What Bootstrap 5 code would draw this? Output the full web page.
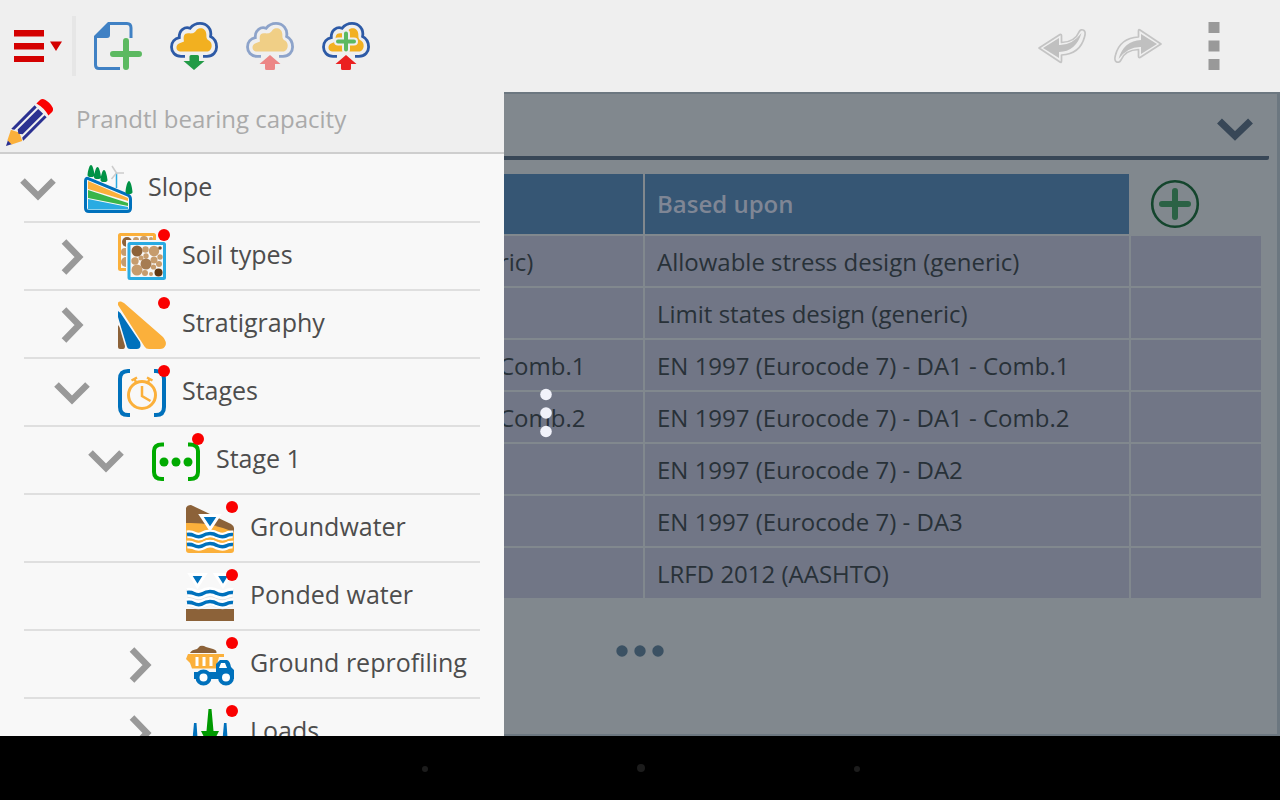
<!DOCTYPE html>
<html lang="en">
<head>
<meta charset="utf-8">
<meta name="viewport" content="width=device-width, initial-scale=1">
<title>Slope – Prandtl bearing capacity</title>
<link rel="stylesheet" href="https://cdn.jsdelivr.net/npm/bootstrap@5.3.0/dist/css/bootstrap.min.css">
<style>
  body { font-family: "Open Sans", sans-serif; font-size: 24px; line-height: 32px; background: #000; }
  svg { display: block; overflow: visible; flex: none; }
  .toolbar { height: 92px; background: #efefef; gap: 28px; padding: 0 42px 0 14px; }
  .tool { border: 0; background: none; padding: 0; }
  .tool-rule { width: 4px; height: 60px; background: #e6e6e6; margin: 0 -10px 0 -18px; }
  .drawer { flex: 0 0 504px; background: #f8f8f8; min-height: 0; }
  .drawer-head { height: 62px; flex: none; background: #efefef; border-bottom: 2px solid #cecece; padding: 0 6px; gap: 22px; }
  .drawer-head input { border: 0; background: none; color: #aaa; padding: 0 0 6px; min-width: 0; outline: 0; }
  .tree { padding-top: 1px; }
  .tree-row { height: 68px; padding-left: 20px; background: linear-gradient(#dfdfdf, #dfdfdf) no-repeat 24px 100% / calc(100% - 48px) 2px; color: #4d4d4d; }
  .tree-row .tool, .no-toggle { width: 36px; margin-right: 28px; flex: none; }
  .tree-row a { color: inherit; gap: 16px; }
  .tree-row a span { margin-top: -6px; font-size: 25px; }
  .depth-1 { padding-left: 54px; }
  .depth-2 { padding-left: 88px; }
  .depth-3 { padding-left: 122px; }
  .work { background: #81888e; border: solid #6c7780; border-width: 2px 3px 2px 0; min-width: 0; }
  .work-head { height: 66px; border-bottom: 4px solid #384757; margin-right: 8px; padding: 4px 16px 0 0; border-bottom-right-radius: 2px; }
  .design { table-layout: fixed; width: calc(100% - 14px); margin-top: 14px; color: #283138; border-collapse: separate; border-spacing: 0; }
  .design td, .design th { height: 52px; padding: 2px 0 0; border: solid #81888e; border-width: 0 2px 2px 0; background: #717686; white-space: nowrap; overflow: hidden; }
  .design td:first-child { text-indent: -5px; }
  .design th { height: 62px; padding: 0; background: #365674; color: #7f8695; font-weight: 600; }
  .design .add-cell { background: none; padding: 0 0 0 20px; }
  .add-cell .tool { display: block; }
  .design td + td, .design th.based { padding-left: 12px; }
  .col-based { width: 486px; }
  .col-add { width: 132px; }
  .more { margin: 45px 0 0 112px; }
  .grip { left: 36px; top: 294px; }
  .sysbar { height: 64px; background: #000; padding-left: 2px; }
</style>
</head>
<body>
<svg width="0" height="0" class="position-absolute" aria-hidden="true">
  <defs>
    <path id="down" d="M2.5 9.5 18 25 33.5 9.5" fill="none" stroke="#999" stroke-width="6.5"/>
    <path id="right" d="M10 2.500 25 18 10 33.500" fill="none" stroke="#999" stroke-width="6.500"/>
    <path id="cloudline" d="M15 34.400H11C5 34.400 1.500 30 1.500 25C1.500 20 5 16.500 9.300 15.600C8.800 8 15 4.300 20 6.300C23 2.500 27 1.300 30 1.300C37 1.300 42 7 40.600 14.500C44.500 16.500 46.600 20 46.600 25C46.600 30 43 34.400 37 34.400H33" fill="none" stroke="#2d5aa6" stroke-width="2.800"/>
    <path id="cloudfill" d="M10 29.500C5.500 29 5.500 23 9 21.500L14 19.500C13 14 14 10.800 19 11.300C24 12 25 10 27 7.500C30 5 36 6 36.300 12C36.500 15 36 17 39 18.500C43 21 42.500 28 38 29.500Z" fill="#f2b020"/>
    <path id="arrowup" d="M24 33 34.500 42H29V46.500Q29 48 27.500 48H20.500Q19 48 19 46.500V42H13.500Z" fill="#eb2020"/>
    <path id="waves" d="M1 3.500Q5 3 8 4.500Q12 6.500 16 5Q20 2.500 24 2.500Q28 2.500 31 4.500Q36 6.500 40 5Q43 3 47 3.500" fill="none"/>
    <circle id="dot" cx="46" cy="2" r="6" fill="#fa0000"/>
  </defs>
</svg>

<div class="d-flex flex-column vh-100">
  <header class="toolbar d-flex align-items-center flex-shrink-0">
    <button class="tool" type="button" aria-label="Menu"><svg width="48" height="48"><path d="M0 8h30v6.500H0zM0 21h30v6.500H0zM0 34h30v6H0zM36 19.500h12L42 29z" fill="#d40000"/></svg></button>
    <div class="tool-rule"></div>
    <button class="tool" type="button" aria-label="New file"><svg width="48" height="48"><path d="M1.500 15V43Q1.500 46.500 5 46.500H26M37 16V6Q37 1.500 33 1.500H15" fill="none" stroke="#4081c4" stroke-width="3"/><path d="M0 16V14L14 0H16V13Q16 16 13 16Z" fill="#4081c4"/><path d="M32 19V45M19 32H45" stroke="#5cb961" stroke-width="6" stroke-linecap="round"/></svg></button>
    <button class="tool" type="button" aria-label="Download from cloud"><svg width="48" height="48"><use href="#cloudline"/><use href="#cloudfill"/><path d="M19.500 34.500Q19.500 33 21 33H27.500Q29 33 29 34.500V39H34.500L24 48 13.500 39H19.500Z" fill="#229a46"/></svg></button>
    <button class="tool" type="button" aria-label="Upload to cloud"><svg width="48" height="48" opacity=".5"><use href="#cloudline"/><use href="#cloudfill"/><use href="#arrowup"/></svg></button>
    <button class="tool" type="button" aria-label="Upload as new"><svg width="48" height="48"><use href="#cloudline"/><use href="#cloudfill"/><path d="M24 11.500V27.500M16 19.500H32" stroke="#efefef" stroke-width="8" stroke-linecap="round"/><path d="M24 11.500V27.500M16 19.500H32" stroke="#5cb961" stroke-width="4" stroke-linecap="round"/><use href="#arrowup"/></svg></button>
    <button class="tool ms-auto" type="button" aria-label="Undo"><svg width="48" height="48"><path id="undo" d="M1 26 22 12.500Q23.500 12 23.500 14V20.500Q37 20 41 10Q43 6.500 46 8.500Q48 10 46.500 15Q42 32 23.500 33V39Q23.500 41 22 40Z" fill="#efefef" stroke="#c4c4c4" stroke-width="1.700" stroke-linejoin="round"/><path id="undofill" d="M5 26 21 16V23Q34 23.500 43.500 11Q38 29.500 21 30V36Z" fill="#c0c0c0"/></svg></button>
    <button class="tool" type="button" aria-label="Redo"><svg width="48" height="48"><g transform="rotate(180 24 24)"><use href="#undo"/><use href="#undofill"/></g></svg></button>
    <button class="tool" type="button" aria-label="More"><svg width="48" height="48"><path d="M18.500 0h11v11h-11zM18.500 18.500h11v11h-11zM18.500 37h11v11h-11z" fill="#999"/></svg></button>
  </header>

  <div class="d-flex flex-grow-1 overflow-hidden">
    <aside class="drawer d-flex flex-column">
      <div class="drawer-head d-flex align-items-center">
        <svg width="48" height="48"><g transform="translate(0 48) rotate(-45)"><path d="M0 0 6 -3V3Z" fill="#2b3191"/><path d="M5 -3 15 -8 17 -4 19 0 17 4 15 8 5 3Z" fill="#fbb03b"/><path d="M16 -8.500H49V-5.500H17.500Q16 -7 16 -8.500ZM16 8.500H49V5.500H17.500Q16 7 16 8.500ZM20 -3.500H49V3.500H20L17.500 0Z" fill="#2b3191"/><path d="M51.500 -8.500H57Q61 -8 61 0T57 8.500H51.500Q54 0 51.500 -8.500Z" fill="#fa0000"/></g></svg>
        <input class="flex-grow-1" type="text" aria-label="Project name" value="Prandtl bearing capacity">
      </div>
      <nav class="tree overflow-hidden" aria-label="Project tree">
        <div class="tree-row d-flex align-items-center">
          <button class="tool" type="button" aria-label="Collapse Slope"><svg width="36" height="36"><use href="#down"/></svg></button>
          <a href="#" class="d-flex align-items-center text-decoration-none">
            <svg width="48" height="48"><path d="M1.500 16Q1.500 12 5 14L44 30Q46.500 31.500 46.500 34V43Q46.500 46.500 43 46.500H5Q1.500 46.500 1.500 43Z" fill="#f8f8f8" stroke="#0071bc" stroke-width="3"/><path d="M4 16 44 33V36L4 24Z" fill="#fbb03b"/><path d="M4 25 44 38V41L4 33Z" fill="#39b54a"/><path d="M4 34 44 42V44.500H4Z" fill="#29abe2"/><path d="M3.500 10C4 5 5.500 0 7 0s3 5 3.500 10q0 2-3.500 2t-3.500-2zM10 12c.5-5 2-10 3.500-10S16.500 7 17 12q0 2-3.500 2T10 12zM16.500 15C17 10 18.500 5 20 5s3 5 3.500 10q0 2-3.500 2t-3.500-2zM41.500 27C42 21 43.500 16 45 16s3 5 3.500 11q0 2-3.500 2t-3.500-2z" fill="#009245"/><path d="M32.500 8V23" stroke="#29abe2" stroke-width="1.500"/><path d="M32.500 8 28 1M32.500 8H40M32.500 8 27.500 14" stroke="#ccc" stroke-width="1.500"/></svg>
            <span>Slope</span></a>
        </div>
        <div class="tree-row depth-1 d-flex align-items-center">
          <button class="tool" type="button" aria-label="Expand Soil types"><svg width="36" height="36"><use href="#right"/></svg></button>
          <a href="#" class="d-flex align-items-center text-decoration-none">
            <svg width="48" height="48"><rect x="1.500" y="1.500" width="35" height="35" rx="1" fill="#f8f8f8" stroke="#fbb03b" stroke-width="3"/><circle cx="9" cy="9" r="5" fill="#8c6239"/><g fill="#c69c6d"><circle cx="18" cy="7" r="3"/><circle cx="26" cy="7" r="4"/><circle cx="7" cy="19" r="4"/><circle cx="8" cy="29" r="5"/><circle cx="33" cy="6" r="2"/></g><rect x="8" y="7" width="40" height="40" fill="#f8f8f8"/><rect x="11" y="10.500" width="35.500" height="35" rx="1" fill="#f8f8f8" stroke="#29abe2" stroke-width="3"/><g fill="#c69c6d"><circle cx="27.500" cy="16.500" r="3.200"/><circle cx="36" cy="18" r="5.200"/><circle cx="17" cy="28" r="3.700"/><circle cx="23" cy="25" r="2.500"/><circle cx="28" cy="23" r="2.700"/><circle cx="36" cy="27" r="3.500"/><circle cx="42" cy="24" r="2.700"/><circle cx="19" cy="37" r="5.500"/><circle cx="27" cy="40" r="3"/><circle cx="35.500" cy="34" r="2.600"/><circle cx="41" cy="31" r="3"/><circle cx="33" cy="41" r="2"/></g><circle cx="19" cy="18" r="5.500" fill="#8c6239"/><circle cx="28" cy="31" r="5.500" fill="#a67c52"/><circle cx="40.500" cy="39.500" r="4" fill="#603813"/><circle cx="42" cy="15" r="1.800" fill="#754c24"/><use href="#dot"/></svg>
            <span>Soil types</span></a>
        </div>
        <div class="tree-row depth-1 d-flex align-items-center">
          <button class="tool" type="button" aria-label="Expand Stratigraphy"><svg width="36" height="36"><use href="#right"/></svg></button>
          <a href="#" class="d-flex align-items-center text-decoration-none">
            <svg width="48" height="48"><path d="M0 4V2Q0 0 3 .5L6 2 45 36Q49 41 47.500 44.500Q46 48 42 48H31Q28 48 26.500 45.500Z" fill="#fbb03b"/><path d="M0 10 2.500 12 22 41Q24 48 19 48H12Q9.500 48 9 46L0 16Z" fill="#0071bc"/><path d="M0 24 1.500 26 7 45Q7 48 5 48H2Q0 48 0 46Z" fill="#8c6239"/><use href="#dot"/></svg>
            <span>Stratigraphy</span></a>
        </div>
        <div class="tree-row depth-1 d-flex align-items-center">
          <button class="tool" type="button" aria-label="Collapse Stages"><svg width="36" height="36"><use href="#down"/></svg></button>
          <a href="#" class="d-flex align-items-center text-decoration-none">
            <svg width="48" height="48"><path d="M12 2H10Q2 2 2 10V38Q2 46 10 46H12M36 2H38Q46 2 46 10V38Q46 46 38 46H36" fill="none" stroke="#0071bc" stroke-width="4"/><g fill="none" stroke="#fbb03b" stroke-width="3"><circle cx="24" cy="26" r="13.500"/><path d="M13.500 11.500 19 8.500M34.500 11.500 29 8.500M16 9.500 18 13M32 9.500 30 13M24 17V27L32.500 32" stroke-width="2.500"/></g><use href="#dot"/></svg>
            <span>Stages</span></a>
        </div>
        <div class="tree-row depth-2 d-flex align-items-center">
          <button class="tool" type="button" aria-label="Collapse Stage 1"><svg width="36" height="36"><use href="#down"/></svg></button>
          <a href="#" class="d-flex align-items-center text-decoration-none">
            <svg width="48" height="48"><path d="M12 7.500H10Q2 7.500 2 14V35Q2 42 10 42H12M36 7.500H38Q46 7.500 46 14V35Q46 42 38 42H36" fill="none" stroke="#0a0" stroke-width="4"/><g fill="#0a0"><circle cx="12" cy="25" r="4.500"/><circle cx="24" cy="25" r="4.500"/><circle cx="36" cy="25" r="4.500"/></g><use href="#dot"/></svg>
            <span>Stage 1</span></a>
        </div>
        <div class="tree-row depth-3 d-flex align-items-center">
          <div class="no-toggle"></div>
          <a href="#" class="d-flex align-items-center text-decoration-none">
            <svg width="48" height="48"><path d="M0 3Q1 0 5 0L45 19Q48 21 48 23V27L20 24 0 18Z" fill="#8c6239"/><path d="M0 18Q25 17 48 27V45Q48 48 45 48H3Q0 48 0 45Z" fill="#fbb03b"/><use href="#waves" y="26" stroke="#fff" stroke-width="8"/><use href="#waves" y="36" stroke="#fff" stroke-width="8"/><use href="#waves" y="26" stroke="#0071bc" stroke-width="3.500"/><use href="#waves" y="31" stroke="#fbb03b" stroke-width="2"/><use href="#waves" y="36" stroke="#0071bc" stroke-width="3.500"/><path d="M15 10.500H33L24 24Z" fill="#0071bc" stroke="#fff" stroke-width="3"/><use href="#dot"/></svg>
            <span>Groundwater</span></a>
        </div>
        <div class="tree-row depth-3 d-flex align-items-center">
          <div class="no-toggle"></div>
          <a href="#" class="d-flex align-items-center text-decoration-none">
            <svg width="48" height="48"><path d="M0 36H48V48H0Z" fill="#8c6239"/><use href="#waves" y="17" stroke="#e4e4e4" stroke-width="9"/><use href="#waves" y="16" stroke="#fff" stroke-width="9"/><use href="#waves" y="27" stroke="#e4e4e4" stroke-width="7"/><use href="#waves" y="26" stroke="#fff" stroke-width="8"/><use href="#waves" y="16" stroke="#0071bc" stroke-width="3.500"/><use href="#waves" y="26" stroke="#0071bc" stroke-width="3.500"/><path d="M4 1.500H19L11.500 13.500ZM29.500 1.500H44.500L37 13.500Z" fill="#0071bc" stroke="#fff" stroke-width="3"/><use href="#dot"/></svg>
            <span>Ponded water</span></a>
        </div>
        <div class="tree-row depth-3 d-flex align-items-center">
          <button class="tool" type="button" aria-label="Expand Ground reprofiling"><svg width="36" height="36"><use href="#right"/></svg></button>
          <a href="#" class="d-flex align-items-center text-decoration-none">
            <svg width="48" height="48"><path d="M4 12Q5 9 11 8L14 5Q17 4 20 6L27 8Q31 9 30.500 12Z" fill="#8c6239"/><path d="M2 13H38V16L33 16 30 27.500H6L4 22 0 18Z" fill="#fbb03b"/><path d="M11 16V25M18 16V25M25 16V25" stroke="#fff" stroke-width="3"/><path d="M8 31H30V23L34 19H41Q44 20 45 26L48 29V38H8Z" fill="#0071bc"/><path d="M35 22H39L41 27H33Z" fill="#fff"/><g fill="#fff" stroke="#0071bc" stroke-width="4"><circle cx="17.500" cy="36.500" r="6"/><circle cx="40" cy="36.500" r="6"/></g><use href="#dot"/></svg>
            <span>Ground reprofiling</span></a>
        </div>
        <div class="tree-row depth-3 d-flex align-items-center">
          <button class="tool" type="button" aria-label="Expand Loads"><svg width="36" height="36"><use href="#right"/></svg></button>
          <a href="#" class="d-flex align-items-center text-decoration-none">
            <svg width="48" height="48"><path d="M22.500 0h3L27.500 22H33L24 40 15 22H20.500Z" fill="#090"/><path d="M8 14h2.500l1.500 22H6zM38 14h2.500l1.500 22h-6z" fill="#0071bc"/><use href="#dot"/></svg>
            <span>Loads</span></a>
        </div>
      </nav>
    </aside>

    <main class="work flex-grow-1 position-relative overflow-hidden">
      <div class="work-head d-flex align-items-center justify-content-end">
        <button class="tool" type="button" aria-label="Collapse panel"><svg width="36" height="36"><path d="M2.500 12 18 27 33.500 12" fill="none" stroke="#384757" stroke-width="7"/></svg></button>
      </div>
      <table class="design">
        <colgroup><col><col class="col-based"><col class="col-add"></colgroup>
        <thead>
          <tr><th></th><th class="based" scope="col">Based upon</th><th class="add-cell"><button class="tool" type="button" aria-label="Add"><svg width="48" height="48"><circle cx="24" cy="24" r="22.800" fill="none" stroke="#14452d" stroke-width="2.600"/><path d="M24 11V37M11 24H37" stroke="#2b6245" stroke-width="6" stroke-linecap="round"/></svg></button></th></tr>
        </thead>
        <tbody>
          <tr><td>ric)</td><td>Allowable stress design (generic)</td><td></td></tr>
          <tr><td></td><td>Limit states design (generic)</td><td></td></tr>
          <tr><td>Comb.1</td><td>EN 1997 (Eurocode 7) - DA1 - Comb.1</td><td></td></tr>
          <tr><td>Comb.2</td><td>EN 1997 (Eurocode 7) - DA1 - Comb.2</td><td></td></tr>
          <tr><td></td><td>EN 1997 (Eurocode 7) - DA2</td><td></td></tr>
          <tr><td></td><td>EN 1997 (Eurocode 7) - DA3</td><td></td></tr>
          <tr><td></td><td>LRFD 2012 (AASHTO)</td><td></td></tr>
        </tbody>
      </table>
      <button class="tool more" type="button" aria-label="More options"><svg width="48" height="12" fill="#3b5163"><circle cx="6" cy="6" r="5.700"/><circle cx="24" cy="6" r="5.700"/><circle cx="42" cy="6" r="5.700"/></svg></button>
      <div class="grip position-absolute"><svg width="12" height="50" fill="#f1f2fa"><circle cx="6" cy="6.500" r="5.800"/><circle cx="6" cy="25" r="5.800"/><circle cx="6" cy="43.500" r="5.800"/></svg></div>
    </main>
  </div>

  <footer class="sysbar d-flex align-items-center justify-content-center flex-shrink-0">
    <svg width="440" height="12" fill="#1c1c1c"><circle cx="4" cy="7" r="3"/><circle cx="220" cy="6" r="4"/><circle cx="436" cy="7" r="3"/></svg>
  </footer>
</div>
<script src="https://cdn.jsdelivr.net/npm/bootstrap@5.3.0/dist/js/bootstrap.bundle.min.js"></script>
</body>
</html>
